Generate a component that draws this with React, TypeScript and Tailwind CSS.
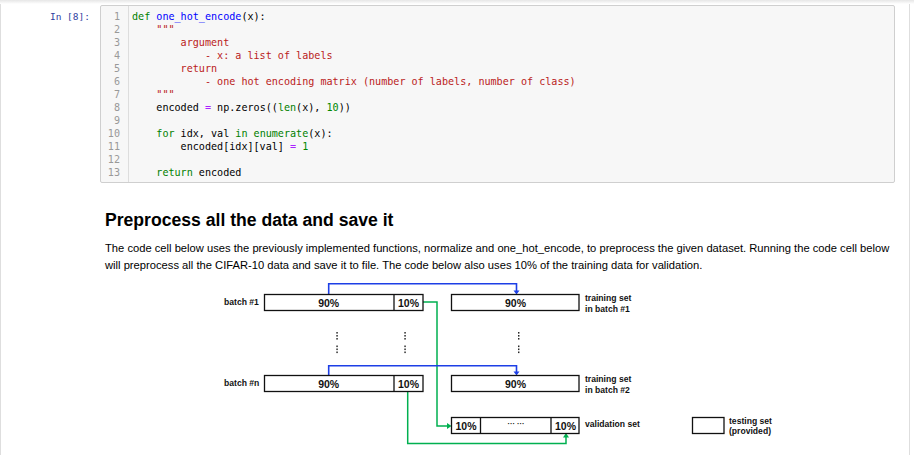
import React from "react";

const K = "text-[#008000]";
const S = "text-[#BA2121]";
const O = "text-[#AA22FF]";
const N = "text-[#008800]";
const D = "text-[#0000FF]";

type Tok = [string, string?];
const lines: Tok[][] = [
  [["def", K], [" "], ["one_hot_encode", D], ["(x):"]],
  [['    """', S]],
  [["        argument", S]],
  [["            - x: a list of labels", S]],
  [["        return", S]],
  [["            - one hot encoding matrix (number of labels, number of class)", S]],
  [['    """', S]],
  [["    encoded "], ["=", O], [" np.zeros(("], ["len", K], ["(x), "], ["10", N], ["))"]],
  [[""]],
  [["    "], ["for", K], [" idx, val "], ["in", K], [" "], ["enumerate", K], ["(x):"]],
  [["        encoded[idx][val] "], ["=", O], [" "], ["1", N]],
  [[""]],
  [["    "], ["return", K], [" encoded"]],
];

const mono = { fontFamily: "'DejaVu Sans Mono', monospace" };

function Diagram() {
  const blue = "#1d3fe6";
  const green = "#00b050";
  const bold = { fontFamily: "'Liberation Sans', Arial, sans-serif", fontWeight: 700 } as const;
  const dots = (x: number) => (
    <g fill="#111">
      {[331, 334, 337, 344.5, 347.5, 350.5].map((y) => (
        <rect key={y} x={x - 0.6} y={y} width={1.3} height={1.6} />
      ))}
    </g>
  );
  return (
    <svg width={785} height={180} viewBox="105 276 785 180" className="block">
      <path d="M422 301 H436 V425 H447" fill="none" stroke={green} strokeWidth={1.5} />
      <polygon points="446,422 446,428 450.5,425" fill={green} />
      <path d="M406.7 391 V442.5 H565 V436" fill="none" stroke={green} strokeWidth={1.5} />
      <polygon points="562,436.5 568,436.5 565,432" fill={green} />
      <path d="M327.7 293 V282.7 H515.5 V290" fill="none" stroke={blue} strokeWidth={1.6} />
      <polygon points="512.5,289.5 518.5,289.5 515.5,293.5" fill={blue} />
      <path d="M327.7 374 V364.7 H515.5 V371" fill="none" stroke={blue} strokeWidth={1.6} />
      <polygon points="512.5,370.5 518.5,370.5 515.5,374.5" fill={blue} />
      <g fill="white" stroke="#111" strokeWidth={1.3}>
        <rect x={263.5} y={293.5} width={158.5} height={16} />
        <rect x={263.5} y={374.5} width={158.5} height={16} />
        <rect x={450.5} y={293.5} width={127.5} height={16} />
        <rect x={450.5} y={374.5} width={127.5} height={16} />
        <rect x={450.5} y={416.5} width={127.5} height={16} />
        <rect x={691.5} y={416.5} width={31.5} height={16} />
      </g>
      <g stroke="#111" strokeWidth={1.3}>
        <line x1={393} y1={293.5} x2={393} y2={309.5} />
        <line x1={393} y1={374.5} x2={393} y2={390.5} />
        <line x1={479.5} y1={416.5} x2={479.5} y2={432.5} />
        <line x1={550} y1={416.5} x2={550} y2={432.5} />
      </g>
      {dots(336)}
      {dots(404)}
      {dots(517.7)}
      <g style={bold} fill="#111" fontSize={10.5} textAnchor="middle">
        <text x={327.7} y={305.5}>90%</text>
        <text x={407.5} y={305.5}>10%</text>
        <text x={327.7} y={386.5}>90%</text>
        <text x={407.5} y={386.5}>10%</text>
        <text x={514.5} y={305.5}>90%</text>
        <text x={514.5} y={386.5}>90%</text>
        <text x={465} y={428.5}>10%</text>
        <text x={564.5} y={428.5}>10%</text>
        <text x={515} y={425} fontSize={7.5}>··· ···</text>
      </g>
      <g style={bold} fill="#111" fontSize={8.6}>
        <text x={223} y={304}>batch #1</text>
        <text x={223} y={385}>batch #n</text>
        <text x={584} y={300}>training set</text>
        <text x={584} y={310.5}>in batch #1</text>
        <text x={584} y={381}>training set</text>
        <text x={584} y={391.5}>in batch #2</text>
        <text x={584} y={426}>validation set</text>
        <text x={728} y={422.5}>testing set</text>
        <text x={728} y={433}>(provided)</text>
      </g>
    </svg>
  );
}

export default function App() {
  return (
    <div className="relative w-[914px] h-[455px] overflow-hidden bg-white">
      <div className="h-[4px] bg-gradient-to-b from-[#e6e6e6] to-white" />
      <div className="w-[910px] h-[451px] border-l border-r border-[#dedede]">
        <div className="flex pt-[1px]">
          <div
            className="w-[99px] text-right pr-[10px] pt-[5px] text-[9.5px] leading-[13px] text-[#303F9F]"
            style={mono}
          >
            In&nbsp;[8]:
          </div>
          <div className="w-[795px] h-[178px] flex border border-[#cfcfcf] rounded-[2px] bg-[#f7f7f7]">
            <div
              className="w-[28px] border-r border-[#dddddd] pr-[8px] pt-[4px] text-right text-[10.1px] leading-[13px] text-[#999999]"
              style={mono}
            >
              {lines.map((_, i) => (
                <div key={i}>{i + 1}</div>
              ))}
            </div>
            <div className="pl-[3px] pt-[4px] text-[10.1px] leading-[13px] text-black" style={mono}>
              {lines.map((l, i) => (
                <div key={i} className="whitespace-pre h-[13px]">
                  {l.map(([t, c], j) => (
                    <span key={j} className={c}>
                      {t}
                    </span>
                  ))}
                </div>
              ))}
            </div>
          </div>
        </div>
        <div className="pl-[104px] pr-[8px]" style={{ fontFamily: "'Liberation Sans', Arial, sans-serif" }}>
          <h2 className="mt-[26px] text-[17.6px] leading-[22px] font-bold text-black">
            Preprocess all the data and save it
          </h2>
          <p className="mt-[9px] text-[11.2px] leading-[17px] text-black">
            The code cell below uses the previously implemented functions, normalize and one_hot_encode, to
            preprocess the given dataset. Running the code cell below will preprocess all the CIFAR-10 data and
            save it to file. The code below also uses 10% of the training data for validation.
          </p>
          <div className="-ml-[104px] pl-[105px] mt-[3px]">
            <Diagram />
          </div>
        </div>
      </div>
    </div>
  );
}
